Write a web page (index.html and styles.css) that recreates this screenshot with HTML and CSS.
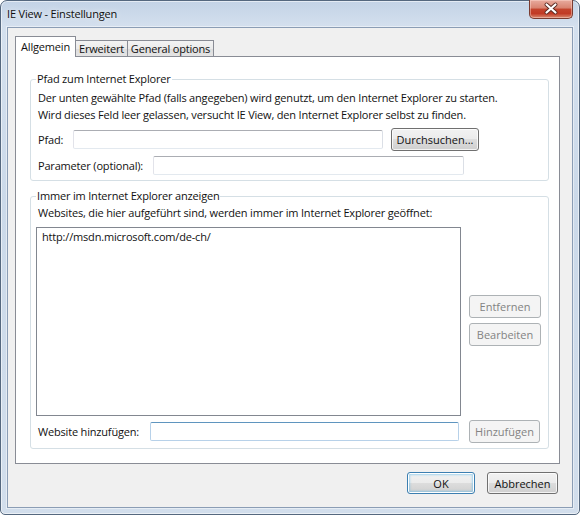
FILE: index.html
```html
<!DOCTYPE html>
<html lang="de">
<head>
<meta charset="utf-8">
<title>IE View - Einstellungen</title>
<link rel="stylesheet" href="styles.css">
</head>
<body>
<div class="window">
  <div class="titlebar">
    <span class="title">IE View - Einstellungen</span>
    <div class="close">
      <svg width="44" height="19" viewBox="0 0 44 19">
        <path d="M17.5 5.5 L26.5 13.5 M26.5 5.5 L17.5 13.5" stroke="#5a2a22" stroke-width="4" stroke-linecap="round"/>
        <path d="M17.5 5.5 L26.5 13.5 M26.5 5.5 L17.5 13.5" stroke="#ffffff" stroke-width="2.2" stroke-linecap="round"/>
      </svg>
    </div>
  </div>
  <div class="client">
    <div class="tabs">
      <div class="tab active">Allgemein</div>
      <div class="tab tab-ext">Erweitert</div>
      <div class="tab tab-gen">General options</div>
    </div>
    <div class="panel">
      <fieldset class="group">
        <legend>Pfad zum Internet Explorer</legend>
        <p class="line first">Der unten gewählte Pfad (falls angegeben) wird genutzt, um den Internet Explorer zu starten.</p>
        <p class="line">Wird dieses Feld leer gelassen, versucht IE View, den Internet Explorer selbst zu finden.</p>
        <div class="row row-path">
          <label class="lbl lbl-path">Pfad:</label>
          <input class="textbox tb-path" type="text">
          <button class="btn btn-browse">Durchsuchen...</button>
        </div>
        <div class="row row-param">
          <label class="lbl lbl-param">Parameter (optional):</label>
          <input class="textbox tb-param" type="text">
        </div>
      </fieldset>
      <fieldset class="group group-sites">
        <legend>Immer im Internet Explorer anzeigen</legend>
        <p class="line">Websites, die hier aufgeführt sind, werden immer im Internet Explorer geöffnet:</p>
        <div class="list-row">
          <div class="listbox">
            <div class="item">http://msdn.microsoft.com/de-ch/</div>
          </div>
          <div class="side-buttons">
            <button class="btn disabled btn-side btn-remove">Entfernen</button>
            <button class="btn disabled btn-side">Bearbeiten</button>
          </div>
        </div>
        <div class="row row-add">
          <label class="lbl lbl-add">Website hinzufügen:</label>
          <input class="textbox tb-add" type="text">
          <button class="btn disabled btn-add">Hinzufügen</button>
        </div>
      </fieldset>
    </div>
    <div class="footer">
      <button class="btn btn-ok default">OK</button>
      <button class="btn btn-cancel">Abbrechen</button>
    </div>
  </div>
</div>
</body>
</html>
```
FILE: styles.css
```css
* {
  box-sizing: border-box;
}

body {
  margin: 0;
  font-family: "Open Sans", "Noto Sans", "Liberation Sans", sans-serif;
  font-size: 11px;
  letter-spacing: -0.18px;
  color: #111;
  background: #ffffff;
}

.window {
  width: 580px;
  height: 515px;
  border: 1px solid #55687f;
  border-radius: 7px 7px 5px 5px;
  background: linear-gradient(to bottom, #c3d3e6 0px, #d4e0ee 26px, #cbd9e9 200px, #d2deec 515px);
  box-shadow: inset 0 0 0 1px rgba(255, 255, 255, 0.55);
  padding: 0 6px 6px 6px;
  display: flex;
  flex-direction: column;
}

.titlebar {
  height: 26px;
  display: flex;
  align-items: center;
}

.title {
  color: #0f0f0f;
  line-height: 16px;
  text-shadow: 0 0 6px rgba(255, 255, 255, 0.9);
}

.close {
  margin-left: auto;
  align-self: flex-start;
  margin-top: -1px;
  width: 44px;
  height: 19px;
  border: 1px solid #7a3b30;
  border-top: none;
  border-radius: 0 0 5px 5px;
  background: linear-gradient(to bottom, #e8ab9e 0%, #d8826f 45%, #c3442d 50%, #c13a25 75%, #d98a70 100%);
  box-shadow: inset 0 0 0 1px rgba(255, 220, 210, 0.45);
  overflow: hidden;
}

.close svg {
  display: block;
  margin: -1px 0 0 -1px;
}

.client {
  flex: 1;
  border: 1px solid #8b9db5;
  box-shadow: 0 0 0 1px rgba(255, 255, 255, 0.45);
  background: #f0f0f0;
  padding: 8px 14px 0 7px;
  display: flex;
  flex-direction: column;
}

.tabs {
  display: flex;
  align-items: flex-end;
  height: 21px;
  margin-bottom: -1px;
  position: relative;
  z-index: 1;
}

.tab {
  border: 1px solid #898c95;
  border-bottom: none;
  text-align: center;
  white-space: nowrap;
}

.tab.active {
  width: 61px;
  height: 21px;
  line-height: 20px;
  background: #ffffff;
}

.tab-ext,
.tab-gen {
  height: 16px;
  margin-bottom: 1px;
  line-height: 15px;
  border-left: none;
  background: linear-gradient(to bottom, #f3f3f3 0%, #ebebeb 50%, #dddddd 51%, #e4e4e4 100%);
}

.tab-ext {
  width: 52px;
}

.tab-gen {
  width: 86px;
}

.panel {
  width: 545px;
  border: 1px solid #898c95;
  background: #ffffff;
  padding: 14px 10px 14px 14px;
}

.group {
  margin: 0;
  min-width: 0;
  border: 1px solid #d5dfe5;
  border-radius: 3px;
  padding: 0 5px 5px 5px;
}

.group legend {
  padding: 0 1px;
  line-height: 16px;
  height: 16px;
  color: #111;
}

.group-sites {
  margin-top: 7px;
}

.line {
  margin: 0 0 0 2px;
  line-height: 17px;
  white-space: nowrap;
}

.line.first {
  margin-top: 2px;
}

.row {
  display: flex;
  align-items: center;
}

.row-path {
  margin-top: 5px;
  height: 23px;
}

.row-param {
  margin-top: 5px;
  height: 19px;
}

.row-add {
  margin-top: 4px;
  height: 23px;
}

.lbl {
  margin-left: 2px;
  line-height: 17px;
  white-space: nowrap;
}

.lbl-path {
  width: 35px;
}

.lbl-param {
  width: 115px;
}

.lbl-add {
  width: 112px;
}

.textbox {
  height: 19px;
  margin: 0;
  padding: 0 3px;
  border: 1px solid #e3e9ef;
  border-top-color: #abadb3;
  border-left-color: #e2e3ea;
  border-right-color: #dbdfe6;
  border-radius: 2px;
  background: #ffffff;
  font: inherit;
  outline: none;
}

.tb-path {
  width: 310px;
}

.tb-param {
  width: 311px;
}

.tb-add {
  width: 309px;
  border-color: #b7d1e9;
  border-top-color: #5f95bf;
}

.btn {
  height: 23px;
  margin: 0;
  padding: 0;
  font: inherit;
  color: #111;
  border: 1px solid #707070;
  border-radius: 3px;
  background: linear-gradient(to bottom, #f2f2f2 0%, #ebebeb 48%, #dddddd 50%, #cfcfcf 100%);
  box-shadow: inset 0 0 0 1px rgba(255, 255, 255, 0.75);
  text-align: center;
  white-space: nowrap;
}

.btn.disabled {
  color: #838383;
  border-color: #adb2b5;
  background: #f4f4f4;
  box-shadow: none;
}

.btn-browse {
  width: 88px;
  margin-left: 8px;
}

.list-row {
  display: flex;
  margin-top: 6px;
}

.listbox {
  width: 425px;
  height: 189px;
  border: 1px solid #828790;
  background: #ffffff;
}

.item {
  padding-left: 5px;
  line-height: 17px;
  margin-top: 0;
}

.side-buttons {
  display: flex;
  flex-direction: column;
  gap: 5px;
  margin-left: 8px;
  padding-top: 68px;
}

.btn-side {
  width: 72px;
}

.btn-add {
  width: 71px;
  margin-left: 10px;
}

.footer {
  display: flex;
  justify-content: flex-end;
  gap: 12px;
  margin-top: 8px;
  padding-right: 0;
}

.btn-ok {
  width: 68px;
  height: 22px;
}

.btn-cancel {
  width: 71px;
  height: 22px;
}

.btn.default {
  border-color: #3c7fb1;
  box-shadow: inset 0 0 0 1px #ffffff, inset 0 0 2px 2px rgba(72, 178, 236, 0.45);
}
```
